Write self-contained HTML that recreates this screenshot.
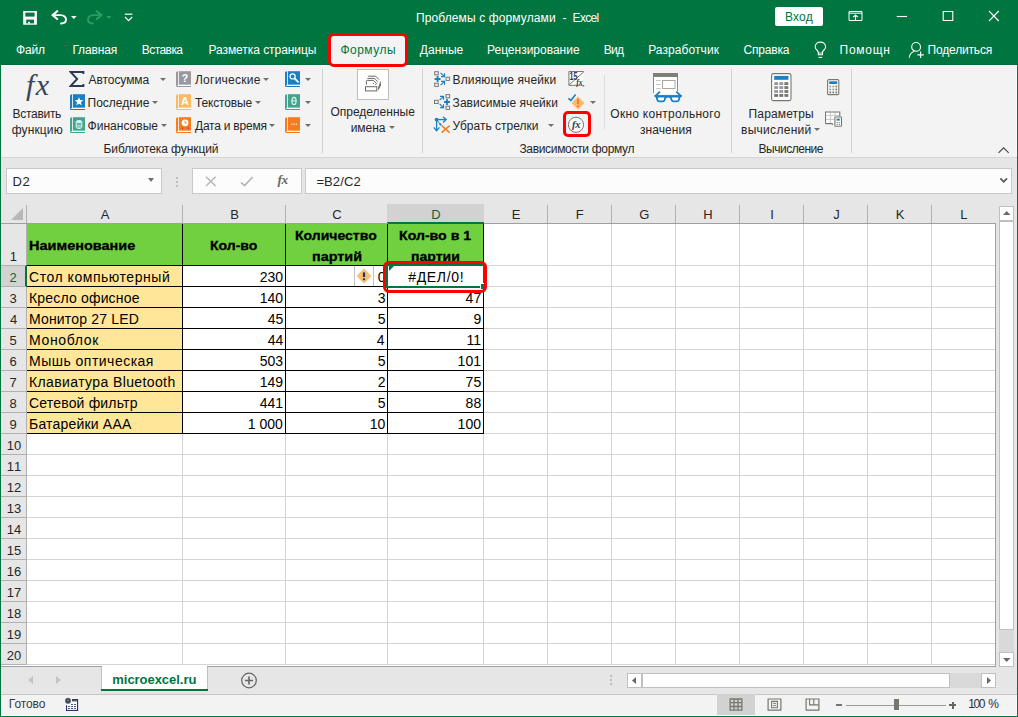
<!DOCTYPE html>
<html lang="ru"><head><meta charset="utf-8"><title>Проблемы с формулами - Excel</title>
<style>
html,body{margin:0;padding:0;background:#fff;}
body{width:1018px;height:717px;overflow:hidden;font-family:"Liberation Sans",sans-serif;}
#app{position:relative;width:1018px;height:717px;overflow:hidden;background:#e6e6e6;}
#app div,#app span,#app svg{position:absolute;box-sizing:border-box;}
.t{white-space:pre;line-height:20px;height:20px;}
#titlebar{left:0;top:0;width:1018px;height:65px;background:#007540;}
#ribbon{left:1px;top:65px;width:1016px;height:92px;background:#f3f3f3;}
#ribbon-line{left:1px;top:157px;width:1016px;height:1px;background:#d5d5d5;}
.sep{width:1px;background:#d0d0d0;}
#fbar{left:1px;top:158px;width:1016px;height:46px;background:#e6e6e6;}
.box{background:#fcfcfc;border:1px solid #c9c9c9;}
#sheet{left:1px;top:204px;width:995px;height:463px;background:#fff;}
.vl{width:1px;background:#d4d4d4;}
.hl{height:1px;background:#d4d4d4;}
.hvl{width:1px;background:#b1b1b1;}
.hhl{height:1px;background:#b1b1b1;}
.bk{background:#000;}
#bottombar{left:1px;top:667px;width:1016px;height:27px;background:#e6e6e6;}
#status{left:1px;top:695px;width:1016px;height:20px;background:#f3f3f3;}
.redbox{border:3px solid #ff0000;border-radius:6px;z-index:5;}
.dd{width:0;height:0;border-left:3px solid transparent;border-right:3px solid transparent;border-top:3px solid #70706a;}
.win-l{left:0;top:0;width:1px;height:717px;background:#007540;}
.win-r{left:1017px;top:0;width:1px;height:717px;background:#007540;}
.win-b{left:0;top:716px;width:1018px;height:1px;background:#007540;}
.win-w{background:#fbfbfb;}

</style></head>
<body>
<div id="app">
<div id="titlebar"></div>
<div id="ribbon"></div><div id="ribbon-line"></div>
<div class="win-w" style="left:1px;top:65px;width:1px;height:92px"></div><div class="win-w" style="left:1016px;top:65px;width:1px;height:92px"></div><div class="win-w" style="left:1px;top:65px;width:1016px;height:1px"></div>
<div style="left:0;top:64px;width:1018px;height:1px;background:#036a38"></div>
<div style="left:331px;top:36px;width:74px;height:29px;background:#f3f3f3"></div>
<div class="redbox" style="left:328px;top:33px;width:80px;height:34px;"></div>
<div style="left:775px;top:7px;width:48px;height:19px;background:#fff;border-radius:2px"></div>
<div class="sep" style="left:322px;top:69px;height:84px"></div>
<div class="sep" style="left:422px;top:69px;height:84px"></div>
<div class="sep" style="left:731px;top:69px;height:84px"></div>
<div class="sep" style="left:851px;top:69px;height:84px"></div>
<div class="sep" style="left:604px;top:75px;height:54px;background:#dcdcdc"></div>
<div style="left:357px;top:69px;width:32px;height:31px;background:#fff;border:1px solid #bebebe"></div>
<div class="dd" style="left:159.5px;top:78px"></div>
<div class="dd" style="left:152px;top:101px"></div>
<div class="dd" style="left:161px;top:124px"></div>
<div class="dd" style="left:262.7px;top:78px"></div>
<div class="dd" style="left:255px;top:101px"></div>
<div class="dd" style="left:269.4px;top:124px"></div>
<div class="dd" style="left:305px;top:78px"></div>
<div class="dd" style="left:305px;top:101px"></div>
<div class="dd" style="left:305px;top:124px"></div>
<div class="dd" style="left:389.3px;top:126px"></div>
<div class="dd" style="left:547.8px;top:124px"></div>
<div class="dd" style="left:589.8px;top:101px"></div>
<div class="dd" style="left:814px;top:128px"></div>
<div class="redbox" style="left:563px;top:111px;width:28px;height:26px;border-radius:5px"></div>
<div id="fbar"></div>
<div class="box" style="left:6px;top:168px;width:156px;height:26px"></div>
<div class="dd" style="left:148px;top:178px;border-left-width:3.5px;border-right-width:3.5px;border-top-width:4px"></div>
<div style="left:176px;top:177px;width:2px;height:2px;background:#bdbdbd"></div>
<div style="left:176px;top:181px;width:2px;height:2px;background:#bdbdbd"></div>
<div style="left:176px;top:185px;width:2px;height:2px;background:#bdbdbd"></div>
<div class="box" style="left:192px;top:168px;width:110px;height:26px"></div>
<div class="box" style="left:305px;top:168px;width:707px;height:26px"></div>
<div id="sheet"></div>
<div style="left:1px;top:204px;width:995px;height:19px;background:#e6e6e6"></div>
<div style="left:1px;top:223px;width:25px;height:442px;background:#e6e6e6"></div>
<div style="left:387px;top:204px;width:97px;height:18px;background:#d2d2d2"></div>
<div style="left:387px;top:222px;width:97px;height:2px;background:#007540"></div>
<div style="left:1px;top:266px;width:24px;height:20px;background:#d2d2d2"></div>
<div style="left:25px;top:265px;width:2px;height:22px;background:#007540"></div>
<div class="vl" style="left:182px;top:224px;height:441px"></div>
<div class="vl" style="left:285px;top:224px;height:441px"></div>
<div class="vl" style="left:387px;top:224px;height:441px"></div>
<div class="vl" style="left:483px;top:224px;height:441px"></div>
<div class="vl" style="left:547px;top:224px;height:441px"></div>
<div class="vl" style="left:611px;top:224px;height:441px"></div>
<div class="vl" style="left:675px;top:224px;height:441px"></div>
<div class="vl" style="left:739px;top:224px;height:441px"></div>
<div class="vl" style="left:803px;top:224px;height:441px"></div>
<div class="vl" style="left:867px;top:224px;height:441px"></div>
<div class="vl" style="left:931px;top:224px;height:441px"></div>
<div class="hl" style="left:27px;top:265px;width:968px"></div>
<div class="hl" style="left:27px;top:286px;width:968px"></div>
<div class="hl" style="left:27px;top:307px;width:968px"></div>
<div class="hl" style="left:27px;top:328px;width:968px"></div>
<div class="hl" style="left:27px;top:349px;width:968px"></div>
<div class="hl" style="left:27px;top:370px;width:968px"></div>
<div class="hl" style="left:27px;top:391px;width:968px"></div>
<div class="hl" style="left:27px;top:412px;width:968px"></div>
<div class="hl" style="left:27px;top:433px;width:968px"></div>
<div class="hl" style="left:27px;top:454px;width:968px"></div>
<div class="hl" style="left:27px;top:475px;width:968px"></div>
<div class="hl" style="left:27px;top:496px;width:968px"></div>
<div class="hl" style="left:27px;top:517px;width:968px"></div>
<div class="hl" style="left:27px;top:538px;width:968px"></div>
<div class="hl" style="left:27px;top:559px;width:968px"></div>
<div class="hl" style="left:27px;top:580px;width:968px"></div>
<div class="hl" style="left:27px;top:601px;width:968px"></div>
<div class="hl" style="left:27px;top:622px;width:968px"></div>
<div class="hl" style="left:27px;top:643px;width:968px"></div>
<div class="hl" style="left:27px;top:664px;width:968px"></div>
<div class="hvl" style="left:26px;top:205px;height:18px"></div>
<div class="hvl" style="left:182px;top:205px;height:18px"></div>
<div class="hvl" style="left:285px;top:205px;height:18px"></div>
<div class="hvl" style="left:547px;top:205px;height:18px"></div>
<div class="hvl" style="left:611px;top:205px;height:18px"></div>
<div class="hvl" style="left:675px;top:205px;height:18px"></div>
<div class="hvl" style="left:739px;top:205px;height:18px"></div>
<div class="hvl" style="left:803px;top:205px;height:18px"></div>
<div class="hvl" style="left:867px;top:205px;height:18px"></div>
<div class="hvl" style="left:931px;top:205px;height:18px"></div>
<div class="hhl" style="left:1px;top:223px;width:387px;background:#a0a0a0"></div>
<div class="hhl" style="left:484px;top:223px;width:512px;background:#a0a0a0"></div>
<div class="hvl" style="left:26px;top:224px;height:41px"></div>
<div class="hvl" style="left:26px;top:287px;height:378px"></div>
<div class="hhl" style="left:1px;top:265px;width:25px"></div>
<div class="hhl" style="left:1px;top:286px;width:25px"></div>
<div class="hhl" style="left:1px;top:307px;width:25px"></div>
<div class="hhl" style="left:1px;top:328px;width:25px"></div>
<div class="hhl" style="left:1px;top:349px;width:25px"></div>
<div class="hhl" style="left:1px;top:370px;width:25px"></div>
<div class="hhl" style="left:1px;top:391px;width:25px"></div>
<div class="hhl" style="left:1px;top:412px;width:25px"></div>
<div class="hhl" style="left:1px;top:433px;width:25px"></div>
<div class="hhl" style="left:1px;top:454px;width:25px"></div>
<div class="hhl" style="left:1px;top:475px;width:25px"></div>
<div class="hhl" style="left:1px;top:496px;width:25px"></div>
<div class="hhl" style="left:1px;top:517px;width:25px"></div>
<div class="hhl" style="left:1px;top:538px;width:25px"></div>
<div class="hhl" style="left:1px;top:559px;width:25px"></div>
<div class="hhl" style="left:1px;top:580px;width:25px"></div>
<div class="hhl" style="left:1px;top:601px;width:25px"></div>
<div class="hhl" style="left:1px;top:622px;width:25px"></div>
<div class="hhl" style="left:1px;top:643px;width:25px"></div>
<div class="hhl" style="left:1px;top:664px;width:25px"></div>
<div style="left:995px;top:224px;width:1px;height:443px;background:#a0a0a0"></div>
<div style="left:1px;top:666px;width:995px;height:1px;background:#a0a0a0"></div>
<svg style="left:11px;top:208px" width="12" height="12" viewBox="0 0 12 12"><path d="M12 0V12H0Z" fill="#b8b8b8"/></svg>
<div style="left:27px;top:224px;width:456px;height:41px;background:#70d040"></div>
<div style="left:27px;top:266px;width:155px;height:167px;background:#ffe699"></div>
<div class="bk" style="left:182px;top:224px;width:1px;height:210px"></div>
<div class="bk" style="left:285px;top:224px;width:1px;height:210px"></div>
<div class="bk" style="left:387px;top:224px;width:1px;height:210px"></div>
<div class="bk" style="left:483px;top:224px;width:1px;height:210px"></div>
<div class="bk" style="left:27px;top:265px;width:457px;height:1px"></div>
<div class="bk" style="left:27px;top:286px;width:457px;height:1px"></div>
<div class="bk" style="left:27px;top:307px;width:457px;height:1px"></div>
<div class="bk" style="left:27px;top:328px;width:457px;height:1px"></div>
<div class="bk" style="left:27px;top:349px;width:457px;height:1px"></div>
<div class="bk" style="left:27px;top:370px;width:457px;height:1px"></div>
<div class="bk" style="left:27px;top:391px;width:457px;height:1px"></div>
<div class="bk" style="left:27px;top:412px;width:457px;height:1px"></div>
<div class="bk" style="left:27px;top:433px;width:457px;height:1px"></div>
<div style="left:354px;top:266px;width:20px;height:20px;background:#fff;border-left:1px solid #c4c4c4;border-right:1px solid #c4c4c4"></div>
<svg style="left:356px;top:267.8px" width="16" height="16" viewBox="0 0 16 16"><path d="M8 0.5L15.5 8L8 15.5L0.5 8Z" fill="#fabf74"/><rect x="6.9" y="4.4" width="2.2" height="4.6" fill="#1f3864"/><rect x="6.9" y="10.4" width="2.2" height="1.8" fill="#1f3864"/></svg>
<div style="left:386px;top:264px;width:99px;height:24px;border:2px solid #007540;background:#fff"></div>
<div style="left:480px;top:283px;width:6px;height:6px;background:#007540;border-left:1px solid #fff;border-top:1px solid #fff"></div>
<svg style="left:389px;top:266px" width="5" height="5" viewBox="0 0 5 5"><path d="M0 0H5L0 5Z" fill="#007540"/></svg>
<div class="redbox" style="left:383px;top:261px;width:104px;height:32px;"></div>
<div style="left:996px;top:204px;width:21px;height:463px;background:#e6e6e6"></div>
<div style="left:999px;top:206px;width:15px;height:15px;background:#fff;border:1px solid #c0c0c0"></div>
<div style="left:999px;top:221px;width:15px;height:409px;background:#fff;border:1px solid #c0c0c0"></div>
<div style="left:999px;top:630px;width:15px;height:22px;background:#d9d9d9"></div>
<div style="left:999px;top:652px;width:15px;height:15px;background:#fff;border:1px solid #c0c0c0"></div>
<svg style="left:1002.8px;top:211px" width="7.4" height="4" viewBox="0 0 7.4 4"><path d="M0 4L3.7 0L7.4 4Z" fill="#6a6a62"/></svg>
<svg style="left:1002.6px;top:658.2px" width="7.4" height="4" viewBox="0 0 7.4 4"><path d="M0 0L3.7 4L7.4 0Z" fill="#6a6a62"/></svg>
<div id="bottombar"></div>
<div style="left:102px;top:666px;width:105px;height:25px;background:#fff"></div>
<div style="left:101px;top:689px;width:107px;height:2px;background:#007540"></div>
<div style="left:101px;top:667px;width:1px;height:22px;background:#c0c0c0"></div>
<div style="left:207px;top:667px;width:1px;height:22px;background:#c0c0c0"></div>
<svg style="left:28px;top:676px" width="5" height="8" viewBox="0 0 5 8"><path d="M5 0L0 4L5 8Z" fill="#c3c3c3"/></svg>
<svg style="left:56px;top:676px" width="5" height="8" viewBox="0 0 5 8"><path d="M0 0L5 4L0 8Z" fill="#c3c3c3"/></svg>
<svg style="left:240px;top:672px" width="18" height="18" viewBox="0 0 18 18"><circle cx="9" cy="8.5" r="7.3" fill="none" stroke="#666" stroke-width="1.2"/><path d="M9 4.5V12.5M5 8.5H13" stroke="#666" stroke-width="1.6"/></svg>
<div style="left:610px;top:675px;width:2px;height:2px;background:#bdbdbd"></div>
<div style="left:610px;top:679px;width:2px;height:2px;background:#bdbdbd"></div>
<div style="left:610px;top:683px;width:2px;height:2px;background:#bdbdbd"></div>
<div style="left:627px;top:673px;width:15px;height:15px;background:#fff;border:1px solid #c0c0c0"></div>
<div style="left:642px;top:673px;width:308px;height:15px;background:#fff;border:1px solid #c0c0c0"></div>
<div style="left:950px;top:673px;width:31px;height:15px;background:#d9d9d9"></div>
<div style="left:981px;top:673px;width:15px;height:15px;background:#fff;border:1px solid #c0c0c0"></div>
<svg style="left:632px;top:677px" width="4" height="7" viewBox="0 0 4 7"><path d="M4 0L0 3.5L4 7Z" fill="#6a6a62"/></svg>
<svg style="left:987px;top:677px" width="4" height="7" viewBox="0 0 4 7"><path d="M0 0L4 3.5L0 7Z" fill="#6a6a62"/></svg>
<div style="left:1px;top:694px;width:1016px;height:1px;background:#c6c6c6"></div>
<div id="status"></div>
<div style="left:717px;top:694px;width:38px;height:22px;background:#d2d2d2"></div>
<div style="left:846px;top:705px;width:100px;height:1px;background:#9a9a9a"></div>
<div style="left:894px;top:699px;width:5px;height:11px;background:#77776f"></div>
<div style="left:836px;top:704px;width:6px;height:2px;background:#77776f"></div>
<div style="left:949.4px;top:704px;width:7px;height:2px;background:#66665e"></div>
<div style="left:951.9px;top:701.5px;width:2px;height:7px;background:#66665e"></div>
<svg style="left:22px;top:10px" width="16" height="16" viewBox="0 0 16 16"><rect x="1.2" y="1" width="13.7" height="13.7" fill="#fff"/><rect x="3.3" y="2.6" width="9.3" height="4" fill="#007540"/><rect x="4.2" y="9.6" width="7.8" height="3.8" fill="#007540"/><rect x="6" y="11.8" width="2" height="1.7" fill="#fff"/></svg>
<svg style="left:51px;top:10px" width="17" height="16" viewBox="0 0 17 16"><path d="M1.6 5.1H9.6C13.2 5.1 15 7.4 15 9.6C15 12 13 13.5 10 13.5" fill="none" stroke="#fff" stroke-width="1.9" stroke-linecap="round"/><path d="M6.2 1.2L1.6 5.1L6.2 9" fill="none" stroke="#fff" stroke-width="2.1" stroke-linecap="round" stroke-linejoin="round"/></svg>
<svg style="left:70.8px;top:16px" width="6" height="3" viewBox="0 0 6 3"><path d="M0 0H5.6L2.8 3Z" fill="#fff"/></svg>
<svg style="left:86px;top:10px" width="17" height="16" viewBox="0 0 17 16"><path d="M15.4 5.1H7.4C3.8 5.1 2 7.4 2 9.6C2 12 4 13.5 7 13.5" fill="none" stroke="#2a9c61" stroke-width="1.9" stroke-linecap="round"/><path d="M10.8 1.2L15.4 5.1L10.8 9" fill="none" stroke="#2a9c61" stroke-width="2.1" stroke-linecap="round" stroke-linejoin="round"/></svg>
<svg style="left:106px;top:16px" width="6" height="3" viewBox="0 0 6 3"><path d="M0 0H5.6L2.8 3Z" fill="#2a9c61"/></svg>
<svg style="left:124px;top:13px" width="10" height="9" viewBox="0 0 10 9"><path d="M0.8 1.2H8.4" stroke="#fff" stroke-width="1.2"/><path d="M1 4L4.6 7.6L8.2 4" fill="none" stroke="#fff" stroke-width="1.2"/></svg>
<svg style="left:848px;top:10px" width="15" height="12" viewBox="0 0 15 12"><path d="M1 1.5H14V10.5H1Z" fill="none" stroke="#fff" stroke-width="1"/><path d="M1 3.2H14" stroke="#fff" stroke-width="1"/><path d="M7.5 10.5V5.3M5.2 7.2L7.5 5L9.8 7.2" fill="none" stroke="#fff" stroke-width="1.1"/></svg>
<svg style="left:896px;top:15px" width="12" height="3" viewBox="0 0 12 3"><path d="M0.8 1.5H11" stroke="#fff" stroke-width="1.1"/></svg>
<svg style="left:942px;top:10px" width="12" height="12" viewBox="0 0 12 12"><path d="M1.2 1.5H10.8V10.5H1.2Z" fill="none" stroke="#fff" stroke-width="1.1"/></svg>
<svg style="left:988px;top:10px" width="12" height="12" viewBox="0 0 12 12"><path d="M1 1L10.8 11M10.8 1L1 11" stroke="#fff" stroke-width="1.1" fill="none"/></svg>
<svg style="left:814px;top:41px" width="13" height="18" viewBox="0 0 13 18"><path d="M4.3 11.2C4.3 9.6 1.2 8.6 1.2 5.9C1.2 3.1 3.5 1.1 6.4 1.1C9.3 1.1 11.6 3.1 11.6 5.9C11.6 8.6 8.5 9.6 8.5 11.2V13.8H4.3Z" fill="none" stroke="#fff" stroke-width="1.1"/><path d="M4.3 12H8.5" stroke="#fff" stroke-width="0.9"/><path d="M4.6 16.4H8.2" stroke="#fff" stroke-width="1.1"/></svg>
<svg style="left:908px;top:41px" width="17" height="18" viewBox="0 0 17 18"><circle cx="8.1" cy="5.9" r="4.4" fill="none" stroke="#fff" stroke-width="1.1"/><path d="M1.2 16.8C1.6 13.6 3.4 11.5 6 10.6" fill="none" stroke="#fff" stroke-width="1.1"/><path d="M12.6 10.6V17M9.4 13.8H15.8" stroke="#fff" stroke-width="1.2"/></svg>
<span style="left:26px;top:64.6px;width:30px;height:40px;line-height:40px;font-family:'Liberation Serif',serif;font-style:italic;font-size:30px;color:#3a4656;letter-spacing:1.3px;white-space:nowrap">fx</span>
<svg style="left:69px;top:71px" width="16" height="16" viewBox="0 0 16 16"><path d="M14.4 3V1H1.6L8.2 8L1.6 15H14.4V13" fill="none" stroke="#2b3a55" stroke-width="1.9" stroke-linejoin="miter"/></svg>
<svg style="left:70px;top:94px" width="15" height="16" viewBox="0 0 15 16"><path d="M2 0.2H1.8C0.8 0.2 0 1 0 2V14.4C0 15.4 0.8 16 1.8 16H15V15H2.2C1.5 15 1.2 14.8 1.2 14.4C1.2 14 1.5 13.7 2.2 13.7H2Z" fill="#1b7fc4"/><rect x="2.9" y="0.2" width="12.1" height="13.5" fill="#1b7fc4"/><rect x="2.2" y="13.9" width="12.8" height="1" fill="#fff" opacity="0.9"/><path d="M9 3.2L10.2 6.1L13.3 6.3L10.9 8.3L11.7 11.3L9 9.7L6.3 11.3L7.1 8.3L4.7 6.3L7.8 6.1Z" fill="#fff"/></svg>
<svg style="left:69.5px;top:117px" width="15" height="16" viewBox="0 0 15 16"><path d="M2 0.2H1.8C0.8 0.2 0 1 0 2V14.4C0 15.4 0.8 16 1.8 16H15V15H2.2C1.5 15 1.2 14.8 1.2 14.4C1.2 14 1.5 13.7 2.2 13.7H2Z" fill="#41a58d"/><rect x="2.9" y="0.2" width="12.1" height="13.5" fill="#41a58d"/><rect x="2.2" y="13.9" width="12.8" height="1" fill="#fff" opacity="0.9"/><g fill="none" stroke="#d9f0ea" stroke-width="1"><ellipse cx="9" cy="4.7" rx="2.8" ry="1.2" fill="#d9f0ea"/><path d="M6.2 4.7V10.3C6.2 11 7.4 11.5 9 11.5C10.6 11.5 11.8 11 11.8 10.3V4.7"/><path d="M6.2 7.2C6.2 7.9 7.4 8.4 9 8.4C10.6 8.4 11.8 7.9 11.8 7.2"/><path d="M6.2 9C6.2 9.7 7.4 10.2 9 10.2C10.6 10.2 11.8 9.7 11.8 9"/></g></svg>
<svg style="left:176px;top:71px" width="15" height="16" viewBox="0 0 15 16"><path d="M2 0.2H1.8C0.8 0.2 0 1 0 2V14.4C0 15.4 0.8 16 1.8 16H15V15H2.2C1.5 15 1.2 14.8 1.2 14.4C1.2 14 1.5 13.7 2.2 13.7H2Z" fill="#9a979e"/><rect x="2.9" y="0.2" width="12.1" height="13.5" fill="#9a979e"/><rect x="2.2" y="13.9" width="12.8" height="1" fill="#fff" opacity="0.9"/><text x="9" y="10.6" font-family="Liberation Sans" font-weight="700" font-size="10.5" fill="#fff" text-anchor="middle">?</text></svg>
<svg style="left:176px;top:94px" width="15" height="16" viewBox="0 0 15 16"><path d="M2 0.2H1.8C0.8 0.2 0 1 0 2V14.4C0 15.4 0.8 16 1.8 16H15V15H2.2C1.5 15 1.2 14.8 1.2 14.4C1.2 14 1.5 13.7 2.2 13.7H2Z" fill="#fdb863"/><rect x="2.9" y="0.2" width="12.1" height="13.5" fill="#fdb863"/><rect x="2.2" y="13.9" width="12.8" height="1" fill="#fff" opacity="0.9"/><text x="9" y="10.9" font-family="Liberation Sans" font-weight="700" font-size="11" fill="#fff" text-anchor="middle">A</text></svg>
<svg style="left:176px;top:117px" width="15" height="16" viewBox="0 0 15 16"><path d="M2 0.2H1.8C0.8 0.2 0 1 0 2V14.4C0 15.4 0.8 16 1.8 16H15V15H2.2C1.5 15 1.2 14.8 1.2 14.4C1.2 14 1.5 13.7 2.2 13.7H2Z" fill="#f57c1f"/><rect x="2.9" y="0.2" width="12.1" height="13.5" fill="#f57c1f"/><rect x="2.2" y="13.9" width="12.8" height="1" fill="#fff" opacity="0.9"/><circle cx="9" cy="5.8" r="3.4" fill="#fff"/><path d="M9 3.8V6H10.8" fill="none" stroke="#f57c1f" stroke-width="0.9"/><rect x="6" y="10.6" width="1.2" height="1.2" fill="#e02020"/><rect x="11.8" y="10.6" width="1.2" height="1.2" fill="#e02020"/></svg>
<svg style="left:285px;top:71px" width="15" height="16" viewBox="0 0 15 16"><path d="M2 0.2H1.8C0.8 0.2 0 1 0 2V14.4C0 15.4 0.8 16 1.8 16H15V15H2.2C1.5 15 1.2 14.8 1.2 14.4C1.2 14 1.5 13.7 2.2 13.7H2Z" fill="#1b7fc4"/><rect x="2.9" y="0.2" width="12.1" height="13.5" fill="#1b7fc4"/><rect x="2.2" y="13.9" width="12.8" height="1" fill="#fff" opacity="0.9"/><circle cx="7.6" cy="5.4" r="2.6" fill="none" stroke="#fff" stroke-width="1.2"/><path d="M9.6 7.4L13 10.8" stroke="#fff" stroke-width="1.7" stroke-linecap="round"/></svg>
<svg style="left:285px;top:94px" width="15" height="16" viewBox="0 0 15 16"><path d="M2 0.2H1.8C0.8 0.2 0 1 0 2V14.4C0 15.4 0.8 16 1.8 16H15V15H2.2C1.5 15 1.2 14.8 1.2 14.4C1.2 14 1.5 13.7 2.2 13.7H2Z" fill="#41a58d"/><rect x="2.9" y="0.2" width="12.1" height="13.5" fill="#41a58d"/><rect x="2.2" y="13.9" width="12.8" height="1" fill="#fff" opacity="0.9"/><ellipse cx="9" cy="6.9" rx="2.1" ry="3.6" fill="none" stroke="#e3f3ef" stroke-width="1.2"/><path d="M7 6.9H11" stroke="#e3f3ef" stroke-width="1"/></svg>
<svg style="left:285px;top:117px" width="15" height="16" viewBox="0 0 15 16"><path d="M2 0.2H1.8C0.8 0.2 0 1 0 2V14.4C0 15.4 0.8 16 1.8 16H15V15H2.2C1.5 15 1.2 14.8 1.2 14.4C1.2 14 1.5 13.7 2.2 13.7H2Z" fill="#f57c1f"/><rect x="2.9" y="0.2" width="12.1" height="13.5" fill="#f57c1f"/><rect x="2.2" y="13.9" width="12.8" height="1" fill="#fff" opacity="0.9"/><rect x="6.2" y="6.6" width="1.2" height="1.2" fill="#fff"/><rect x="8.5" y="6.6" width="1.2" height="1.2" fill="#fff"/><rect x="10.8" y="6.6" width="1.2" height="1.2" fill="#fff"/></svg>
<svg style="left:355px;top:67px" width="36" height="35" viewBox="0 0 36 35"><g fill="none" stroke="#6a6a62" stroke-width="1"><rect x="10.5" y="19.7" width="11.3" height="4.2"/><path d="M11.4 17.6V14.2Q11.4 13.4 12.2 13.4H18.6L21.6 16.5L20.2 18"/><path d="M12.3 11.4H19.6L22.8 14.7"/><path d="M13.2 9.2H20.7L24 12.6"/></g><rect x="17.9" y="16" width="1" height="1" fill="#6a6a62"/><path d="M25.6 13.5L26 18L23.5 23.5L23 21Z" fill="#6a6a62"/></svg>
<svg style="left:434px;top:71px" width="17" height="16" viewBox="0 0 17 16"><rect x="0.7" y="0.7" width="3.6" height="3.2" fill="#f3f3f3" stroke="#77776f" stroke-width="1"/><rect x="0.7" y="12.2" width="3.6" height="3.2" fill="#f3f3f3" stroke="#77776f" stroke-width="1"/><rect x="12" y="6.2" width="3.6" height="3.2" fill="#f3f3f3" stroke="#77776f" stroke-width="1"/><path d="M0.6000000000000001 8H6.6M3.6 5V11" stroke="#1b7fc4" stroke-width="1.8"/><path d="M6.6 1.8L10.2 5.4" stroke="#1b7fc4" stroke-width="1.2"/><path d="M7.0 5.6H10.5V2.2" fill="none" stroke="#1b7fc4" stroke-width="1.2"/><path d="M6.6 14.2L10.2 10.6" stroke="#1b7fc4" stroke-width="1.2"/><path d="M7.0 10.4H10.5V13.8" fill="none" stroke="#1b7fc4" stroke-width="1.2"/></svg>
<svg style="left:434px;top:94px" width="17" height="16" viewBox="0 0 17 16"><rect x="0.5" y="6.3" width="3.6" height="3.2" fill="#f3f3f3" stroke="#77776f" stroke-width="1"/><rect x="12" y="0.6" width="3.6" height="3.2" fill="#f3f3f3" stroke="#77776f" stroke-width="1"/><rect x="12" y="12.2" width="3.6" height="3.2" fill="#f3f3f3" stroke="#77776f" stroke-width="1"/><path d="M10 8H16M13 5V11" stroke="#1b7fc4" stroke-width="1.8"/><path d="M5.6 6.2L9.2 2.6" stroke="#1b7fc4" stroke-width="1.2"/><path d="M6.0 2.4H9.5V5.8" fill="none" stroke="#1b7fc4" stroke-width="1.2"/><path d="M5.6 9.8L9.2 13.4" stroke="#1b7fc4" stroke-width="1.2"/><path d="M6.0 13.6H9.5V10.2" fill="none" stroke="#1b7fc4" stroke-width="1.2"/></svg>
<svg style="left:433px;top:116px" width="18" height="18" viewBox="0 0 18 18"><circle cx="3.6" cy="3.6" r="1.9" fill="#1b7fc4"/><path d="M3.6 3.6H12.5" stroke="#1b7fc4" stroke-width="1.3"/><path d="M10 0.8L13.2 3.6L10 6.4" fill="none" stroke="#1b7fc4" stroke-width="1.3"/><path d="M3.6 3.6V14" stroke="#1b7fc4" stroke-width="1.3"/><path d="M0.8 11.4L3.6 14.8L6.4 11.4" fill="none" stroke="#1b7fc4" stroke-width="1.3"/><path d="M4.5 5L8 9" stroke="#3a9a80" stroke-width="1.1"/><path d="M8.6 9.8L5.8 9L8 6.8Z" fill="#1b7fc4"/><path d="M8.6 9.6L16.6 16.6M16.6 9.6L8.6 16.6" stroke="#f57c1f" stroke-width="1.5"/></svg>
<svg style="left:568px;top:70px" width="17" height="18" viewBox="0 0 17 18"><path d="M15.5 1.5H0.9V15.3H14.5" fill="#fff" stroke="#77776f" stroke-width="1"/><path d="M1.2 14.8L15.8 1.8" stroke="#77776f" stroke-width="1"/><text x="1.6" y="10.4" font-family="Liberation Sans" font-weight="700" font-size="10" fill="#2b3a55" textLength="8" lengthAdjust="spacingAndGlyphs">15</text><text x="8.2" y="14.8" font-family="Liberation Serif" font-style="italic" font-weight="700" font-size="8.5" fill="#2b3a55" textLength="6.4" lengthAdjust="spacingAndGlyphs">fx</text><rect x="14.6" y="15" width="1.6" height="1.6" fill="#77776f"/></svg>
<svg style="left:567px;top:93px" width="19" height="17" viewBox="0 0 19 17"><path d="M11 3.6L17.4 10L11 16.4L4.6 10Z" fill="#fbb969"/><path d="M11 6V11.2M11 12.6V14.2" stroke="#f26b1d" stroke-width="1.5"/><path d="M1.4 5.2L3.8 7.6L8.6 1.6" fill="none" stroke="#1b7fc4" stroke-width="1.6"/></svg>
<svg style="left:567px;top:116px" width="18" height="18" viewBox="0 0 18 18"><circle cx="9" cy="8.8" r="7.6" fill="#fafafa" stroke="#77776f" stroke-width="1"/><text x="5" y="12.4" font-family="Liberation Serif" font-style="italic" font-weight="700" font-size="10.5" fill="#2b3a55" letter-spacing="-0.3">fx</text></svg>
<svg style="left:652px;top:72px" width="31" height="31" viewBox="0 0 31 31"><rect x="1.5" y="1" width="24" height="21" fill="#fff"/><rect x="1" y="1" width="25" height="4" fill="#7f7f78"/><path d="M1.5 5V21M25.5 5V19" stroke="#8a8a83" stroke-width="1"/><path d="M4 8.5H8.8M4 12.5H8.8M4 16.5H8.8" stroke="#c8c8c8" stroke-width="1"/><rect x="10.5" y="8.5" width="12.5" height="8" fill="#fff" stroke="#a8a8a3" stroke-width="1"/><g fill="none" stroke="#1b7fc4" stroke-width="1.8"><path d="M3.3 24.2L8 19.6"/><path d="M29 24.2L24.3 19.6"/><path d="M2.4 24H30"/><path d="M4.4 24.6H13.6L12.6 28C12.3 29 11.6 29.4 10.6 29.4H7.4C6.4 29.4 5.7 29 5.4 28Z" fill="#fff"/><path d="M18.6 24.6H27.8L26.8 28C26.5 29 25.8 29.4 24.8 29.4H21.6C20.6 29.4 19.9 29 19.6 28Z" fill="#fff"/><path d="M13.6 25.4C15 24.6 17.2 24.6 18.6 25.4"/></g></svg>
<svg style="left:770.6px;top:72.8px" width="21" height="29" viewBox="0 0 21 29"><rect x="0.6" y="0.6" width="19.4" height="27" rx="1.8" fill="#fff" stroke="#77776f" stroke-width="1.1"/><rect x="3.2" y="2.9" width="14.2" height="3.9" fill="#1b7fc4"/><rect x="3.2" y="9.2" width="3.9" height="2.8" fill="#9a979e"/><rect x="8.3" y="9.2" width="3.9" height="2.8" fill="#9a979e"/><rect x="13.399999999999999" y="9.2" width="3.9" height="2.8" fill="#77776f"/><rect x="3.2" y="13.149999999999999" width="3.9" height="2.8" fill="#9a979e"/><rect x="8.3" y="13.149999999999999" width="3.9" height="2.8" fill="#9a979e"/><rect x="13.399999999999999" y="13.149999999999999" width="3.9" height="2.8" fill="#77776f"/><rect x="3.2" y="17.1" width="3.9" height="2.8" fill="#9a979e"/><rect x="8.3" y="17.1" width="3.9" height="2.8" fill="#9a979e"/><rect x="13.399999999999999" y="17.1" width="3.9" height="2.8" fill="#77776f"/><rect x="3.2" y="21.05" width="3.9" height="2.8" fill="#77776f"/><rect x="8.3" y="21.05" width="3.9" height="2.8" fill="#77776f"/><rect x="13.399999999999999" y="21.05" width="3.9" height="2.8" fill="#77776f"/></svg>
<svg style="left:826.6px;top:79px" width="13" height="17" viewBox="0 0 13 17"><rect x="0.6" y="0.6" width="11.2" height="15" rx="1.2" fill="#fff" stroke="#77776f" stroke-width="1.1"/><rect x="2.2" y="2.3" width="8" height="2.7" fill="#1b7fc4"/><rect x="2.4" y="6.6" width="1.8" height="1.8" fill="#9a979e"/><rect x="5.4" y="6.6" width="1.8" height="1.8" fill="#9a979e"/><rect x="8.4" y="6.6" width="1.8" height="1.8" fill="#77776f"/><rect x="2.4" y="9.55" width="1.8" height="1.8" fill="#9a979e"/><rect x="5.4" y="9.55" width="1.8" height="1.8" fill="#9a979e"/><rect x="8.4" y="9.55" width="1.8" height="1.8" fill="#77776f"/><rect x="2.4" y="12.5" width="1.8" height="1.8" fill="#77776f"/><rect x="5.4" y="12.5" width="1.8" height="1.8" fill="#77776f"/><rect x="8.4" y="12.5" width="1.8" height="1.8" fill="#77776f"/></svg>
<svg style="left:824.5px;top:110.5px" width="18" height="17" viewBox="0 0 18 17"><rect x="0.8" y="0.8" width="14" height="11.8" fill="#fff"/><path d="M0.8 4.6H14.8M0.8 8.4H10M5.4 1V12.6M10 1V6" stroke="#c6c6c6" stroke-width="1"/><path d="M0.5 12.8V1H14.8V5.6" fill="none" stroke="#77776f" stroke-width="1.1"/><path d="M0.5 12.6H7L8 13.6" fill="none" stroke="#77776f" stroke-width="1.1"/><rect x="9.9" y="6" width="6.6" height="9.2" rx="0.8" fill="#fff" stroke="#77776f" stroke-width="1.1"/><rect x="11.6" y="7.6" width="3.2" height="2" fill="#1b7fc4"/><rect x="11.6" y="11" width="1.1" height="1.1" fill="#77776f"/><rect x="13.7" y="11" width="1.1" height="1.1" fill="#77776f"/><rect x="11.6" y="12.9" width="1.1" height="1.1" fill="#77776f"/><rect x="13.7" y="12.9" width="1.1" height="1.1" fill="#77776f"/></svg>
<svg style="left:997px;top:146px" width="13" height="8" viewBox="0 0 13 8"><path d="M1.5 6.8L6.6 1.8L11.7 6.8" fill="none" stroke="#444" stroke-width="1.1"/></svg>
<svg style="left:205px;top:176px" width="12" height="11" viewBox="0 0 12 11"><path d="M1 0.8L10.6 10M10.6 0.8L1 10" stroke="#b3b3b3" stroke-width="1.3" fill="none"/></svg>
<svg style="left:240px;top:176px" width="14" height="11" viewBox="0 0 14 11"><path d="M1 6.4L4.6 9.6L12.6 1" stroke="#b3b3b3" stroke-width="1.6" fill="none"/></svg>
<span style="left:277.5px;top:170px;height:20px;line-height:20px;font-family:'Liberation Serif',serif;font-style:italic;font-weight:700;font-size:13.5px;color:#6a6a64;letter-spacing:-0.6px;white-space:nowrap">fx</span>
<svg style="left:999px;top:177px" width="10" height="7" viewBox="0 0 10 7"><path d="M1.4 1.4L4.7 4.8L8 1.4" fill="none" stroke="#555" stroke-width="1.7"/></svg>
<svg style="left:65px;top:697px" width="14" height="15" viewBox="0 0 14 15"><circle cx="3" cy="3.8" r="2.8" fill="#233a5e" stroke="#8a8466" stroke-width="0.6"/><path d="M3 2V5.6M1.4 3.4H4.6" stroke="#9c9678" stroke-width="0.6"/><rect x="7.1" y="2" width="5.9" height="2.6" fill="#233a5e"/><rect x="8.8" y="2.9" width="0.9" height="0.9" fill="#b5ae8a"/><rect x="10.8" y="2.9" width="0.9" height="0.9" fill="#b5ae8a"/><rect x="1.8" y="7" width="10.4" height="6" fill="#fff"/><rect x="7" y="4.6" width="5.2" height="3" fill="#fff"/><rect x="12" y="2" width="1.1" height="12" fill="#233a5e"/><rect x="1" y="12.9" width="12.1" height="1.1" fill="#233a5e"/><rect x="1" y="8.2" width="1.1" height="5.8" fill="#233a5e"/><rect x="6" y="7" width="2" height="1" rx="0.4" fill="#233a5e"/><rect x="9" y="7" width="2" height="1" rx="0.4" fill="#233a5e"/><rect x="3" y="9" width="2" height="1" rx="0.4" fill="#233a5e"/><rect x="6" y="9" width="2" height="1" rx="0.4" fill="#233a5e"/><rect x="9" y="9" width="2" height="1" rx="0.4" fill="#233a5e"/><rect x="3" y="11" width="2" height="1" rx="0.4" fill="#233a5e"/><rect x="6" y="11" width="2" height="1" rx="0.4" fill="#233a5e"/><rect x="9" y="11" width="2" height="1" rx="0.4" fill="#233a5e"/></svg>
<svg style="left:728.5px;top:698px" width="14" height="13" viewBox="0 0 14 13"><path d="M1.1 1H12.9V12.2H1.1ZM1.1 4.7H12.9M1.1 8.5H12.9M5 1V12.2M9 1V12.2" fill="none" stroke="#77776f" stroke-width="1.3"/></svg>
<svg style="left:766.6px;top:698px" width="15" height="13" viewBox="0 0 15 13"><path d="M1.1 1H13.9V12.2H1.1Z" fill="none" stroke="#77776f" stroke-width="1.2"/><path d="M4.6 3.4H10.4V9.8H4.6Z" fill="none" stroke="#77776f" stroke-width="1.1"/><path d="M6 5.4H9M6 7.6H9" stroke="#77776f" stroke-width="0.9"/></svg>
<svg style="left:804.7px;top:698px" width="15" height="13" viewBox="0 0 15 13"><path d="M1.1 1H13.9V12.2H1.1Z" fill="none" stroke="#77776f" stroke-width="1.2"/><path d="M4.6 1V6.9H8.8V1M8.8 6.9H13.9" fill="none" stroke="#77776f" stroke-width="1.1"/></svg>
<div class="win-w" style="left:1px;top:695px;width:1px;height:21px"></div><div class="win-w" style="left:1016px;top:695px;width:1px;height:21px"></div><div class="win-w" style="left:1px;top:715px;width:1016px;height:1px"></div>
<div class="win-l"></div><div class="win-r"></div><div class="win-b"></div>
<div id="texts">
<span class='t' style="left:415.90px;top:8px;color:#ffffff;font-family:'Liberation Sans',sans-serif;font-size:12px;font-weight:400;letter-spacing:0.121px;">Проблемы с формулами</span>
<span class='t' style="left:562.60px;top:8px;color:#ffffff;font-family:'Liberation Sans',sans-serif;font-size:12px;font-weight:400;">-</span>
<span class='t' style="left:572.60px;top:8px;color:#ffffff;font-family:'Liberation Sans',sans-serif;font-size:12px;font-weight:400;letter-spacing:-0.700px;">Excel</span>
<span class='t' style="left:785.00px;top:7px;color:#007540;font-family:'Liberation Sans',sans-serif;font-size:12px;font-weight:400;letter-spacing:0.167px;">Вход</span>
<span class='t' style="left:16.00px;top:40px;color:#ffffff;font-family:'Liberation Sans',sans-serif;font-size:12px;font-weight:400;letter-spacing:-0.167px;">Файл</span>
<span class='t' style="left:72.40px;top:40px;color:#ffffff;font-family:'Liberation Sans',sans-serif;font-size:12px;font-weight:400;letter-spacing:-0.117px;">Главная</span>
<span class='t' style="left:141.80px;top:40px;color:#ffffff;font-family:'Liberation Sans',sans-serif;font-size:12px;font-weight:400;letter-spacing:-0.567px;">Вставка</span>
<span class='t' style="left:208.40px;top:40px;color:#ffffff;font-family:'Liberation Sans',sans-serif;font-size:12px;font-weight:400;letter-spacing:-0.050px;">Разметка страницы</span>
<span class='t' style="left:419.80px;top:40px;color:#ffffff;font-family:'Liberation Sans',sans-serif;font-size:12px;font-weight:400;letter-spacing:0.020px;">Данные</span>
<span class='t' style="left:487.00px;top:40px;color:#ffffff;font-family:'Liberation Sans',sans-serif;font-size:12px;font-weight:400;letter-spacing:-0.008px;">Рецензирование</span>
<span class='t' style="left:603.80px;top:40px;color:#ffffff;font-family:'Liberation Sans',sans-serif;font-size:12px;font-weight:400;letter-spacing:-0.750px;">Вид</span>
<span class='t' style="left:648.20px;top:40px;color:#ffffff;font-family:'Liberation Sans',sans-serif;font-size:12px;font-weight:400;letter-spacing:0.080px;">Разработчик</span>
<span class='t' style="left:743.50px;top:40px;color:#ffffff;font-family:'Liberation Sans',sans-serif;font-size:12px;font-weight:400;letter-spacing:-0.183px;">Справка</span>
<span class='t' style="left:839.60px;top:40px;color:#ffffff;font-family:'Liberation Sans',sans-serif;font-size:12px;font-weight:400;letter-spacing:0.720px;">Помощн</span>
<span class='t' style="left:927.50px;top:40px;color:#ffffff;font-family:'Liberation Sans',sans-serif;font-size:12px;font-weight:400;letter-spacing:-0.167px;">Поделиться</span>
<span class='t' style="left:340.40px;top:40px;color:#007540;font-family:'Liberation Sans',sans-serif;font-size:12px;font-weight:400;letter-spacing:0.500px;">Формулы</span>
<span class='t' style="left:12.60px;top:104px;color:#262626;font-family:'Liberation Sans',sans-serif;font-size:12px;font-weight:400;letter-spacing:-0.300px;">Вставить</span>
<span class='t' style="left:11.70px;top:120px;color:#262626;font-family:'Liberation Sans',sans-serif;font-size:12px;font-weight:400;letter-spacing:0.133px;">функцию</span>
<span class='t' style="left:88.50px;top:70px;color:#262626;font-family:'Liberation Sans',sans-serif;font-size:12px;font-weight:400;letter-spacing:-0.062px;">Автосумма</span>
<span class='t' style="left:87.50px;top:93px;color:#262626;font-family:'Liberation Sans',sans-serif;font-size:12px;font-weight:400;letter-spacing:0.012px;">Последние</span>
<span class='t' style="left:87.50px;top:116px;color:#262626;font-family:'Liberation Sans',sans-serif;font-size:12px;font-weight:400;letter-spacing:0.033px;">Финансовые</span>
<span class='t' style="left:195.00px;top:70px;color:#262626;font-family:'Liberation Sans',sans-serif;font-size:12px;font-weight:400;letter-spacing:0.244px;">Логические</span>
<span class='t' style="left:195.00px;top:93px;color:#262626;font-family:'Liberation Sans',sans-serif;font-size:12px;font-weight:400;letter-spacing:-0.150px;">Текстовые</span>
<span class='t' style="left:195.00px;top:116px;color:#262626;font-family:'Liberation Sans',sans-serif;font-size:12px;font-weight:400;letter-spacing:-0.227px;">Дата и время</span>
<span class='t' style="left:103.50px;top:139px;color:#262626;font-family:'Liberation Sans',sans-serif;font-size:12px;font-weight:400;letter-spacing:-0.088px;">Библиотека функций</span>
<span class='t' style="left:330.40px;top:102px;color:#262626;font-family:'Liberation Sans',sans-serif;font-size:12px;font-weight:400;letter-spacing:0.000px;">Определенные</span>
<span class='t' style="left:350.70px;top:118px;color:#262626;font-family:'Liberation Sans',sans-serif;font-size:12px;font-weight:400;letter-spacing:-0.050px;">имена</span>
<span class='t' style="left:452.60px;top:70px;color:#262626;font-family:'Liberation Sans',sans-serif;font-size:12px;font-weight:400;letter-spacing:0.121px;">Влияющие ячейки</span>
<span class='t' style="left:452.60px;top:93px;color:#262626;font-family:'Liberation Sans',sans-serif;font-size:12px;font-weight:400;letter-spacing:0.040px;">Зависимые ячейки</span>
<span class='t' style="left:452.60px;top:116px;color:#262626;font-family:'Liberation Sans',sans-serif;font-size:12px;font-weight:400;letter-spacing:0.000px;">Убрать стрелки</span>
<span class='t' style="left:519.40px;top:139px;color:#262626;font-family:'Liberation Sans',sans-serif;font-size:12px;font-weight:400;letter-spacing:-0.318px;">Зависимости формул</span>
<span class='t' style="left:610.30px;top:104px;color:#262626;font-family:'Liberation Sans',sans-serif;font-size:12px;font-weight:400;letter-spacing:0.263px;">Окно контрольного</span>
<span class='t' style="left:640.00px;top:120px;color:#262626;font-family:'Liberation Sans',sans-serif;font-size:12px;font-weight:400;letter-spacing:0.071px;">значения</span>
<span class='t' style="left:748.60px;top:104px;color:#262626;font-family:'Liberation Sans',sans-serif;font-size:12px;font-weight:400;letter-spacing:0.138px;">Параметры</span>
<span class='t' style="left:741.00px;top:120px;color:#262626;font-family:'Liberation Sans',sans-serif;font-size:12px;font-weight:400;letter-spacing:0.289px;">вычислений</span>
<span class='t' style="left:758.60px;top:139px;color:#262626;font-family:'Liberation Sans',sans-serif;font-size:12px;font-weight:400;letter-spacing:-0.489px;">Вычисление</span>
<span class='t' style="left:12.40px;top:172px;color:#262626;font-family:'Liberation Sans',sans-serif;font-size:13px;font-weight:400;letter-spacing:0.600px;">D2</span>
<span class='t' style="left:316.40px;top:172px;color:#262626;font-family:'Liberation Sans',sans-serif;font-size:13px;font-weight:400;letter-spacing:0.100px;">=B2/C2</span>
<span class='t' style="left:100.70px;top:205px;color:#262626;font-family:'Liberation Sans',sans-serif;font-size:13px;font-weight:400;">A</span>
<span class='t' style="left:230.20px;top:205px;color:#262626;font-family:'Liberation Sans',sans-serif;font-size:13px;font-weight:400;">B</span>
<span class='t' style="left:332.20px;top:205px;color:#262626;font-family:'Liberation Sans',sans-serif;font-size:13px;font-weight:400;">C</span>
<span class='t' style="left:431.20px;top:205px;color:#17603d;font-family:'Liberation Sans',sans-serif;font-size:13px;font-weight:400;">D</span>
<span class='t' style="left:511.70px;top:205px;color:#262626;font-family:'Liberation Sans',sans-serif;font-size:13px;font-weight:400;">E</span>
<span class='t' style="left:575.70px;top:205px;color:#262626;font-family:'Liberation Sans',sans-serif;font-size:13px;font-weight:400;">F</span>
<span class='t' style="left:639.20px;top:205px;color:#262626;font-family:'Liberation Sans',sans-serif;font-size:13px;font-weight:400;">G</span>
<span class='t' style="left:703.20px;top:205px;color:#262626;font-family:'Liberation Sans',sans-serif;font-size:13px;font-weight:400;">H</span>
<span class='t' style="left:770.20px;top:205px;color:#262626;font-family:'Liberation Sans',sans-serif;font-size:13px;font-weight:400;">I</span>
<span class='t' style="left:833.20px;top:205px;color:#262626;font-family:'Liberation Sans',sans-serif;font-size:13px;font-weight:400;">J</span>
<span class='t' style="left:895.70px;top:205px;color:#262626;font-family:'Liberation Sans',sans-serif;font-size:13px;font-weight:400;">K</span>
<span class='t' style="left:960.20px;top:205px;color:#262626;font-family:'Liberation Sans',sans-serif;font-size:13px;font-weight:400;">L</span>
<span class='t' style="left:9.85px;top:247px;color:#262626;font-family:'Liberation Sans',sans-serif;font-size:13px;font-weight:400;">1</span>
<span class='t' style="left:9.50px;top:268px;color:#17603d;font-family:'Liberation Sans',sans-serif;font-size:13px;font-weight:400;">2</span>
<span class='t' style="left:9.50px;top:289px;color:#262626;font-family:'Liberation Sans',sans-serif;font-size:13px;font-weight:400;">3</span>
<span class='t' style="left:10.00px;top:310px;color:#262626;font-family:'Liberation Sans',sans-serif;font-size:13px;font-weight:400;">4</span>
<span class='t' style="left:9.50px;top:331px;color:#262626;font-family:'Liberation Sans',sans-serif;font-size:13px;font-weight:400;">5</span>
<span class='t' style="left:9.50px;top:352px;color:#262626;font-family:'Liberation Sans',sans-serif;font-size:13px;font-weight:400;">6</span>
<span class='t' style="left:9.50px;top:373px;color:#262626;font-family:'Liberation Sans',sans-serif;font-size:13px;font-weight:400;">7</span>
<span class='t' style="left:9.50px;top:394px;color:#262626;font-family:'Liberation Sans',sans-serif;font-size:13px;font-weight:400;">8</span>
<span class='t' style="left:9.50px;top:415px;color:#262626;font-family:'Liberation Sans',sans-serif;font-size:13px;font-weight:400;">9</span>
<span class='t' style="left:6.75px;top:436px;color:#262626;font-family:'Liberation Sans',sans-serif;font-size:13px;font-weight:400;letter-spacing:-0.100px;">10</span>
<span class='t' style="left:6.75px;top:457px;color:#262626;font-family:'Liberation Sans',sans-serif;font-size:13px;font-weight:400;letter-spacing:0.900px;">11</span>
<span class='t' style="left:6.75px;top:478px;color:#262626;font-family:'Liberation Sans',sans-serif;font-size:13px;font-weight:400;letter-spacing:-0.100px;">12</span>
<span class='t' style="left:6.75px;top:499px;color:#262626;font-family:'Liberation Sans',sans-serif;font-size:13px;font-weight:400;letter-spacing:-0.100px;">13</span>
<span class='t' style="left:6.75px;top:520px;color:#262626;font-family:'Liberation Sans',sans-serif;font-size:13px;font-weight:400;letter-spacing:-0.100px;">14</span>
<span class='t' style="left:6.75px;top:541px;color:#262626;font-family:'Liberation Sans',sans-serif;font-size:13px;font-weight:400;letter-spacing:-0.100px;">15</span>
<span class='t' style="left:6.75px;top:562px;color:#262626;font-family:'Liberation Sans',sans-serif;font-size:13px;font-weight:400;letter-spacing:-0.100px;">16</span>
<span class='t' style="left:6.75px;top:583px;color:#262626;font-family:'Liberation Sans',sans-serif;font-size:13px;font-weight:400;letter-spacing:-0.100px;">17</span>
<span class='t' style="left:6.75px;top:604px;color:#262626;font-family:'Liberation Sans',sans-serif;font-size:13px;font-weight:400;letter-spacing:-0.100px;">18</span>
<span class='t' style="left:6.75px;top:625px;color:#262626;font-family:'Liberation Sans',sans-serif;font-size:13px;font-weight:400;letter-spacing:-0.100px;">19</span>
<span class='t' style="left:6.75px;top:646px;color:#262626;font-family:'Liberation Sans',sans-serif;font-size:13px;font-weight:400;letter-spacing:-0.100px;">20</span>
<span class='t' style="left:29.00px;top:267px;color:#000000;font-family:'Liberation Sans',sans-serif;font-size:14px;font-weight:400;letter-spacing:0.537px;">Стол компьютерный</span>
<span class='t' style="left:29.00px;top:288px;color:#000000;font-family:'Liberation Sans',sans-serif;font-size:14px;font-weight:400;letter-spacing:0.177px;">Кресло офисное</span>
<span class='t' style="left:29.00px;top:309px;color:#000000;font-family:'Liberation Sans',sans-serif;font-size:14px;font-weight:400;letter-spacing:0.177px;">Монитор 27 LED</span>
<span class='t' style="left:29.00px;top:330px;color:#000000;font-family:'Liberation Sans',sans-serif;font-size:14px;font-weight:400;letter-spacing:0.671px;">Моноблок</span>
<span class='t' style="left:29.00px;top:351px;color:#000000;font-family:'Liberation Sans',sans-serif;font-size:14px;font-weight:400;letter-spacing:0.486px;">Мышь оптическая</span>
<span class='t' style="left:29.00px;top:372px;color:#000000;font-family:'Liberation Sans',sans-serif;font-size:14px;font-weight:400;letter-spacing:0.384px;">Клавиатура Bluetooth</span>
<span class='t' style="left:29.00px;top:393px;color:#000000;font-family:'Liberation Sans',sans-serif;font-size:14px;font-weight:400;letter-spacing:0.177px;">Сетевой фильтр</span>
<span class='t' style="left:29.00px;top:414px;color:#000000;font-family:'Liberation Sans',sans-serif;font-size:14px;font-weight:400;letter-spacing:0.192px;">Батарейки ААА</span>
<span class='t' style="left:259.80px;top:267px;color:#000000;font-family:'Liberation Sans',sans-serif;font-size:14px;font-weight:400;">230</span>
<span class='t' style="left:377.80px;top:267px;color:#000000;font-family:'Liberation Sans',sans-serif;font-size:14px;font-weight:400;">0</span>
<span class='t' style="left:259.80px;top:288px;color:#000000;font-family:'Liberation Sans',sans-serif;font-size:14px;font-weight:400;">140</span>
<span class='t' style="left:377.80px;top:288px;color:#000000;font-family:'Liberation Sans',sans-serif;font-size:14px;font-weight:400;">3</span>
<span class='t' style="left:465.60px;top:288px;color:#000000;font-family:'Liberation Sans',sans-serif;font-size:14px;font-weight:400;">47</span>
<span class='t' style="left:267.80px;top:309px;color:#000000;font-family:'Liberation Sans',sans-serif;font-size:14px;font-weight:400;">45</span>
<span class='t' style="left:377.80px;top:309px;color:#000000;font-family:'Liberation Sans',sans-serif;font-size:14px;font-weight:400;">5</span>
<span class='t' style="left:473.60px;top:309px;color:#000000;font-family:'Liberation Sans',sans-serif;font-size:14px;font-weight:400;">9</span>
<span class='t' style="left:267.80px;top:330px;color:#000000;font-family:'Liberation Sans',sans-serif;font-size:14px;font-weight:400;">44</span>
<span class='t' style="left:376.80px;top:330px;color:#000000;font-family:'Liberation Sans',sans-serif;font-size:14px;font-weight:400;">4</span>
<span class='t' style="left:466.60px;top:330px;color:#000000;font-family:'Liberation Sans',sans-serif;font-size:14px;font-weight:400;">11</span>
<span class='t' style="left:259.80px;top:351px;color:#000000;font-family:'Liberation Sans',sans-serif;font-size:14px;font-weight:400;">503</span>
<span class='t' style="left:377.80px;top:351px;color:#000000;font-family:'Liberation Sans',sans-serif;font-size:14px;font-weight:400;">5</span>
<span class='t' style="left:457.60px;top:351px;color:#000000;font-family:'Liberation Sans',sans-serif;font-size:14px;font-weight:400;">101</span>
<span class='t' style="left:259.80px;top:372px;color:#000000;font-family:'Liberation Sans',sans-serif;font-size:14px;font-weight:400;">149</span>
<span class='t' style="left:377.80px;top:372px;color:#000000;font-family:'Liberation Sans',sans-serif;font-size:14px;font-weight:400;">2</span>
<span class='t' style="left:465.60px;top:372px;color:#000000;font-family:'Liberation Sans',sans-serif;font-size:14px;font-weight:400;">75</span>
<span class='t' style="left:259.80px;top:393px;color:#000000;font-family:'Liberation Sans',sans-serif;font-size:14px;font-weight:400;">441</span>
<span class='t' style="left:377.80px;top:393px;color:#000000;font-family:'Liberation Sans',sans-serif;font-size:14px;font-weight:400;">5</span>
<span class='t' style="left:465.60px;top:393px;color:#000000;font-family:'Liberation Sans',sans-serif;font-size:14px;font-weight:400;">88</span>
<span class='t' style="left:247.80px;top:414px;color:#000000;font-family:'Liberation Sans',sans-serif;font-size:14px;font-weight:400;">1 000</span>
<span class='t' style="left:369.80px;top:414px;color:#000000;font-family:'Liberation Sans',sans-serif;font-size:14px;font-weight:400;">10</span>
<span class='t' style="left:457.60px;top:414px;color:#000000;font-family:'Liberation Sans',sans-serif;font-size:14px;font-weight:400;">100</span>
<span class='t' style="left:408.20px;top:267px;color:#000000;font-family:'Liberation Sans',sans-serif;font-size:14px;font-weight:400;letter-spacing:0.667px;">#ДЕЛ/0!</span>
<span class='t' style="left:28.89px;top:236px;color:#000000;font-family:'Liberation Sans',sans-serif;font-size:13px;font-weight:700;transform:scaleX(1.1149);transform-origin:0 0;-webkit-text-stroke:0.3px #000;">Наименование</span>
<span class='t' style="left:209.72px;top:236px;color:#000000;font-family:'Liberation Sans',sans-serif;font-size:13px;font-weight:700;transform:scaleX(1.0791);transform-origin:0 0;-webkit-text-stroke:0.3px #000;">Кол-во</span>
<span class='t' style="left:295.42px;top:226px;color:#000000;font-family:'Liberation Sans',sans-serif;font-size:13px;font-weight:700;transform:scaleX(1.0784);transform-origin:0 0;-webkit-text-stroke:0.3px #000;">Количество</span>
<span class='t' style="left:311.89px;top:247px;color:#000000;font-family:'Liberation Sans',sans-serif;font-size:13px;font-weight:700;transform:scaleX(1.1068);transform-origin:0 0;-webkit-text-stroke:0.3px #000;">партий</span>
<span class='t' style="left:398.71px;top:226px;color:#000000;font-family:'Liberation Sans',sans-serif;font-size:13px;font-weight:700;transform:scaleX(1.0877);transform-origin:0 0;-webkit-text-stroke:0.3px #000;">Кол-во в 1</span>
<span class='t' style="left:410.72px;top:247px;color:#000000;font-family:'Liberation Sans',sans-serif;font-size:13px;font-weight:700;transform:scaleX(1.0818);transform-origin:0 0;-webkit-text-stroke:0.3px #000;">партии</span>
<span class='t' style="left:112.30px;top:670px;color:#007540;font-family:'Liberation Sans',sans-serif;font-size:13px;font-weight:700;letter-spacing:-0.042px;">microexcel.ru</span>
<span class='t' style="left:8.80px;top:694px;color:#3a3a3a;font-family:'Liberation Sans',sans-serif;font-size:12px;font-weight:400;letter-spacing:-0.080px;">Готово</span>
<span class='t' style="left:968.30px;top:694px;color:#2a2f3a;font-family:'Liberation Sans',sans-serif;font-size:12px;font-weight:400;letter-spacing:-1.500px;">100</span>
<span class='t' style="left:988.30px;top:694px;color:#2a2f3a;font-family:'Liberation Sans',sans-serif;font-size:12px;font-weight:400;">%</span>
</div>
</div>
</body></html>
